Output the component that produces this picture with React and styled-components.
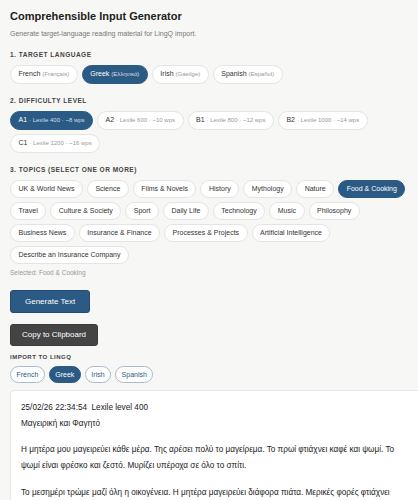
import React, { useState } from "react";
import styled, { createGlobalStyle } from "styled-components";

const GlobalStyle = createGlobalStyle`
  html, body {
    margin: 0;
    padding: 0;
    background: #f7f7f5;
    overflow-x: hidden;
  }
  body {
    font-family: "Liberation Sans", Arial, sans-serif;
    color: #333;
  }
`;

const languages = [
  { id: "fr", name: "French", native: "Français" },
  { id: "el", name: "Greek", native: "Ελληνικά" },
  { id: "ga", name: "Irish", native: "Gaeilge" },
  { id: "es", name: "Spanish", native: "Español" },
];

const levels = [
  { id: "A1", lexile: 400, wps: 8 },
  { id: "A2", lexile: 600, wps: 10 },
  { id: "B1", lexile: 800, wps: 12 },
  { id: "B2", lexile: 1000, wps: 14 },
  { id: "C1", lexile: 1200, wps: 16 },
];

const topics = [
  "UK & World News", "Science", "Films & Novels", "History", "Mythology", "Nature",
  "Food & Cooking", "Travel", "Culture & Society", "Sport", "Daily Life", "Technology",
  "Music", "Philosophy", "Business News", "Insurance & Finance", "Processes & Projects",
  "Artificial Intelligence", "Describe an Insurance Company",
];

const paragraphs = [
  "Η μητέρα μου μαγειρεύει κάθε μέρα. Της αρέσει πολύ το μαγείρεμα. Το πρωί φτιάχνει καφέ και ψωμί. Το ψωμί είναι φρέσκο και ζεστό. Μυρίζει υπέροχα σε όλο το σπίτι.",
  "Το μεσημέρι τρώμε μαζί όλη η οικογένεια. Η μητέρα μαγειρεύει διάφορα πιάτα. Μερικές φορές φτιάχνει μουσακά ή παστίτσιο. Εμείς βοηθάμε στην κουζίνα.",
];

function App() {
  const [lang, setLang] = useState("el");
  const [level, setLevel] = useState("A1");
  const [selected, setSelected] = useState(["Food & Cooking"]);
  const [importLang, setImportLang] = useState("el");

  const toggleTopic = (t) => {
    setSelected((prev) =>
      prev.includes(t) ? prev.filter((x) => x !== t) : [...prev, t]
    );
  };

  return (
    <Page>
      <GlobalStyle />
      <Title>Comprehensible Input Generator</Title>
      <Subtitle>Generate target-language reading material for LingQ import.</Subtitle>

      <Section>
        <Label>1. Target Language</Label>
        <ChipRow>
          {languages.map((l) => (
            <Chip key={l.id} $active={lang === l.id} onClick={() => setLang(l.id)}>
              {l.name} <Small $active={lang === l.id}>({l.native})</Small>
            </Chip>
          ))}
        </ChipRow>
      </Section>

      <Section>
        <Label>2. Difficulty Level</Label>
        <ChipRow>
          {levels.map((lv) => (
            <Chip key={lv.id} $active={level === lv.id} onClick={() => setLevel(lv.id)}>
              {lv.id} <Small $active={level === lv.id}>· Lexile {lv.lexile} · ~{lv.wps} wps</Small>
            </Chip>
          ))}
        </ChipRow>
      </Section>

      <Section>
        <Label>3. Topics (select one or more)</Label>
        <ChipRow>
          {topics.map((t) => (
            <Chip key={t} $active={selected.includes(t)} onClick={() => toggleTopic(t)}>
              {t}
            </Chip>
          ))}
        </ChipRow>
        <SelectedNote>Selected: {selected.join(", ")}</SelectedNote>
      </Section>

      <GenerateButton>Generate Text</GenerateButton>
      <CopyButton>Copy to Clipboard</CopyButton>

      <ImportLabel>Import to LingQ</ImportLabel>
      <ImportRow>
        {languages.map((l) => (
          <ImportChip key={l.id} $active={importLang === l.id} onClick={() => setImportLang(l.id)}>
            {l.name}
          </ImportChip>
        ))}
      </ImportRow>

      <Output>
        <OutLine>25/02/26 22:34:54&nbsp;&nbsp;Lexile level 400</OutLine>
        <OutLine>Μαγειρική και Φαγητό</OutLine>
        {paragraphs.map((p, i) => (
          <Para key={i}>{p}</Para>
        ))}
      </Output>
    </Page>
  );
}

const Page = styled.div`
  padding: 9px 10px 20px;
`;

const Title = styled.h1`
  margin: 0;
  font-size: 11px;
  line-height: 14px;
  font-weight: 700;
  color: #222;
`;

const Subtitle = styled.p`
  margin: 5.5px 0 0;
  font-size: 7px;
  line-height: 9px;
  color: #777;
`;

const Section = styled.div`
  margin-top: 13px;
`;

const Label = styled.div`
  font-size: 6.5px;
  line-height: 8px;
  font-weight: 700;
  letter-spacing: 0.5px;
  text-transform: uppercase;
  color: #444;
  margin-bottom: 6.5px;
`;

const ChipRow = styled.div`
  display: flex;
  flex-wrap: wrap;
  gap: 4.5px 4px;
`;

const Chip = styled.button`
  font-family: inherit;
  font-size: 7px;
  line-height: 9.5px;
  padding: 3px 7.5px;
  border-radius: 20px;
  border: 1px solid ${(p) => (p.$active ? "#2b5a84" : "#e4e4e2")};
  background: ${(p) => (p.$active ? "#2b5a84" : "#fff")};
  color: ${(p) => (p.$active ? "#fff" : "#333")};
  cursor: pointer;
  white-space: nowrap;
`;

const Small = styled.span`
  font-size: 6px;
  color: ${(p) => (p.$active ? "#d3dde8" : "#999")};
`;

const SelectedNote = styled.div`
  margin-top: 5px;
  font-size: 6.5px;
  line-height: 8px;
  color: #999;
`;

const BaseButton = styled.button`
  display: block;
  font-family: inherit;
  font-size: 8px;
  color: #fff;
  border-radius: 3px;
  cursor: pointer;
`;

const GenerateButton = styled(BaseButton)`
  margin-top: 13px;
  height: 23.5px;
  padding: 0 14px;
  background: #2b5a84;
  border: 1px solid #234b70;
`;

const CopyButton = styled(BaseButton)`
  margin-top: 11px;
  height: 21.5px;
  padding: 0 11px;
  background: #444;
  border: 1px solid #3a3a3a;
`;

const ImportLabel = styled(Label)`
  font-size: 6px;
  line-height: 7px;
  margin: 8px 0 5.5px;
`;

const ImportRow = styled.div`
  display: flex;
  gap: 4px;
`;

const ImportChip = styled.button`
  font-family: inherit;
  font-size: 7px;
  line-height: 9px;
  padding: 3px 5.5px;
  border-radius: 20px;
  border: 1px solid ${(p) => (p.$active ? "#2b5a84" : "#a7bbcf")};
  background: ${(p) => (p.$active ? "#2b5a84" : "#fff")};
  color: ${(p) => (p.$active ? "#fff" : "#2b5a84")};
  cursor: pointer;
`;

const Output = styled.div`
  box-sizing: content-box;
  width: calc(100% - 14px);
  margin-top: 7px;
  padding: 8.5px 24px 9px 10px;
  background: #fff;
  border: 1px solid #e6e6e4;
  border-radius: 4px;
  font-size: 8.2px;
  line-height: 16px;
  color: #222;
`;

const OutLine = styled.div``;

const Para = styled.p`
  margin: 10.5px 0 0;
`;

export default App;
